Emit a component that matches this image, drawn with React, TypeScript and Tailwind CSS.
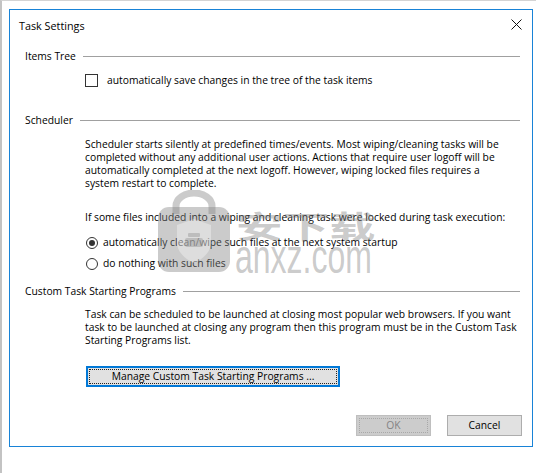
import React from "react";

function SectionHeader({ title }: { title: string }) {
  return (
    <div className="flex h-[14px] items-center pl-[15px] pr-[12px]">
      <span className="leading-[13px]">{title}</span>
      <div className="ml-[7px] h-px flex-1 bg-[#a0a0a0]" />
    </div>
  );
}

function Radio({ checked, label, className }: { checked?: boolean; label: string; className?: string }) {
  return (
    <div className={`flex h-[13px] items-center pl-[76px] ${className ?? ""}`}>
      <div className="flex h-[12px] w-[12px] items-center justify-center rounded-full border border-[#333333] bg-white">
        {checked && <div className="h-[6px] w-[6px] rounded-full bg-[#333333]" />}
      </div>
      <span className="ml-[5px] leading-[13px]">{label}</span>
    </div>
  );
}

export default function App() {
  return (
    <div
      className="relative h-[473px] w-[536px] overflow-hidden border-l-2 border-t border-l-[#c3c3c3] border-t-[#d4d4d4] bg-white text-[10.3px] text-black"
      style={{ fontFamily: '"Open Sans", "Noto Sans", sans-serif' }}
    >
      {/* left strip accents */}
      <div className="absolute left-[-2px] top-[19px] h-[8px] w-[2px] bg-[#3c7fc4]" />
      <div className="absolute left-[-2px] top-[424px] h-[7px] w-[2px] bg-[#6a9fd4]" />
      <div className="absolute left-[-2px] top-[465px] h-[8px] w-[2px] bg-[#a0522d]" />

      <div className="ml-[7px] mt-[8px] flex h-[438px] w-[524px] flex-col border border-[#1883d7] bg-white">
        {/* title bar */}
        <div className="flex h-[30px] items-center justify-between pl-[9px] pr-[10px]">
          <span className="text-[10.8px] leading-[13px]">Task Settings</span>
          <svg width="11" height="11" viewBox="0 0 11 11" className="mt-[-1px]">
            <path d="M0.5 0.5 L10.5 10.5 M10.5 0.5 L0.5 10.5" stroke="#111" strokeWidth="1" />
          </svg>
        </div>

        {/* Items Tree */}
        <div className="mt-[9px]">
          <SectionHeader title="Items Tree" />
        </div>
        <div className="mt-[10px] flex h-[14px] items-center pl-[75px]">
          <div className="h-[13px] w-[13px] border border-[#333333] bg-white" />
          <span className="ml-[9px] leading-[13px]">automatically save changes in the tree of the task items</span>
        </div>

        {/* Scheduler */}
        <div className="mt-[26px]">
          <SectionHeader title="Scheduler" />
        </div>
        <p className="mt-[11px] pl-[75px] leading-[13px]">
          Scheduler starts silently at predefined times/events. Most wiping/cleaning tasks will be
          <br />
          completed without any additional user actions. Actions that require user logoff will be
          <br />
          automatically completed at the next logoff. However, wiping locked files requires a
          <br />
          system restart to complete.
        </p>
        <p className="mt-[21px] pl-[75px] leading-[13px]">
          If some files included into a wiping and cleaning task were locked during task execution:
        </p>
        <Radio checked label="automatically clean/wipe such files at the next system startup" className="mt-[12px]" />
        <Radio label="do nothing with such files" className="mt-[8px]" />

        {/* Custom Task Starting Programs */}
        <div className="mt-[14px]">
          <SectionHeader title="Custom Task Starting Programs" />
        </div>
        <p className="mt-[10px] pl-[75px] leading-[13px]">
          Task can be scheduled to be launched at closing most popular web browsers. If you want
          <br />
          task to be launched at closing any program then this program must be in the Custom Task
          <br />
          Starting Programs list.
        </p>
        <div className="mt-[19px] pl-[76px]">
          <div className="flex h-[21px] w-[254px] items-center justify-center border-2 border-[#0078d7] bg-[#e1e1e1] p-px">
            <div className="flex h-full w-full items-center justify-center border border-dotted border-[#222222]">
              <span className="leading-[13px]">Manage Custom Task Starting Programs ...</span>
            </div>
          </div>
        </div>

        <div className="mt-[28px] flex justify-end gap-[16px] pr-[10px]">
          <div className="flex h-[21px] w-[75px] items-center justify-center border border-[#bfbfbf] bg-[#cccccc] p-[2px]">
            <div className="flex h-full w-full items-center justify-center border border-dotted border-[#a8a8a8]">
              <span className="leading-[13px] text-[#838383]">OK</span>
            </div>
          </div>
          <div className="flex h-[21px] w-[75px] items-center justify-center border border-[#adadad] bg-[#e1e1e1]">
            <span className="leading-[13px]">Cancel</span>
          </div>
        </div>
      </div>

      {/* watermark */}
      <div className="pointer-events-none absolute left-[152px] top-[189px]">
        <svg width="80" height="84" viewBox="0 0 80 84">
          <path d="M22 24 V16 a18 13 0 0 1 36 0 V24" fill="none" stroke="rgba(130,130,130,0.42)" strokeWidth="7" />
          <rect x="4" y="17" width="72" height="65" rx="11" fill="rgba(130,130,130,0.42)" />
          <path d="M40 29 L57 35 V52 C57 62 49 69 40 73 C31 69 23 62 23 52 V35 Z" fill="rgba(255,255,255,0.35)" />
          <rect x="34" y="43" width="12" height="4" rx="1" fill="rgba(130,130,130,0.35)" />
          <rect x="31" y="48" width="18" height="9" rx="2" fill="rgba(130,130,130,0.35)" />
        </svg>
      </div>
      <div
        className="pointer-events-none absolute left-[234px] top-[208px] whitespace-nowrap text-[31px] font-bold leading-none text-[rgba(130,130,130,0.42)] [transform-origin:left_top] [transform:scaleX(1.5)]"
        style={{ fontFamily: '"Noto Sans CJK SC", sans-serif' }}
      >
        安下载
      </div>
      <div
        className="pointer-events-none absolute left-[233px] top-[231px] whitespace-nowrap text-[32px] leading-none text-[rgba(130,130,130,0.42)] [transform-origin:left_top] [transform:scaleY(1.5)]"
        style={{ fontFamily: '"Liberation Sans", sans-serif' }}
      >
        anxz.com
      </div>
    </div>
  );
}
